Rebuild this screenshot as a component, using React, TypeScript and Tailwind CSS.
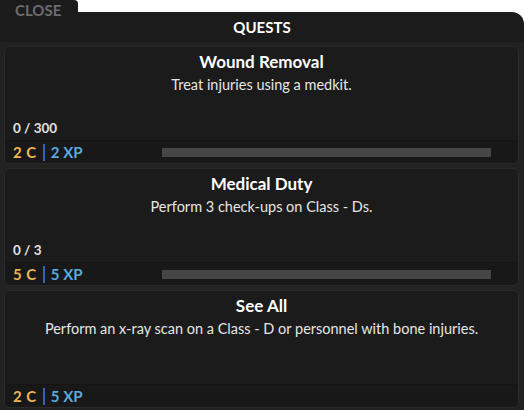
import React from "react";

type Q = { title: string; desc: string; progress?: string; c: string; xp: string; bar: boolean };

const quests: Q[] = [
  { title: "Wound Removal", desc: "Treat injuries using a medkit.", progress: "0 / 300", c: "2 C", xp: "2 XP", bar: true },
  { title: "Medical Duty", desc: "Perform 3 check-ups on Class - Ds.", progress: "0 / 3", c: "5 C", xp: "5 XP", bar: true },
  { title: "See All", desc: "Perform an x-ray scan on a Class - D or personnel with bone injuries.", c: "2 C", xp: "5 XP", bar: false },
];

function Card({ q }: { q: Q }) {
  return (
    <div className="flex flex-col h-[118px] rounded-[6px] border border-[#2a2a2a] bg-[#1b1b1b] overflow-hidden shrink-0">
      <div className="flex-1 flex flex-col px-2">
        <div className="text-center text-white font-bold text-[17px] leading-[20px] pt-[5px]">{q.title}</div>
        <div className="text-center text-[#e6e6e6] text-[14.5px] leading-[16px] mt-[5px]">{q.desc}</div>
        <div className="flex-1" />
        {q.progress && (
          <div className="text-[#e0e0e0] font-bold text-[13.5px] leading-[16px] pb-[4px]">{q.progress}</div>
        )}
      </div>
      <div className="h-[23px] bg-[#181818] border-t border-[#151515] flex items-center pl-[8px] pr-[27px]">
        <span className="text-[#e8b554] font-bold text-[15px] tracking-[0.5px] leading-[18px]">{q.c}</span>
        <span className="w-[2px] h-[17px] bg-[#3563b8] mx-[6px]" />
        <span className="text-[#5aa8de] font-bold text-[15px] leading-[18px]">{q.xp}</span>
        <div className="flex-1" />
        {q.bar && <div className="w-[329px] h-[9px] bg-[#464646]" />}
      </div>
    </div>
  );
}

export default function App() {
  return (
    <div className="w-[524px] h-[410px] bg-white overflow-hidden flex flex-col" style={{ fontFamily: "Lato, 'Noto Sans', sans-serif" }}>
      <div className="h-[12px] flex shrink-0">
        <div className="w-[78px] h-[12px] bg-[#1b1b1b] rounded-tr-[4px] relative">
          <span className="absolute z-10 left-[15px] top-[1px] text-[#6c6c6c] font-bold text-[15px] leading-[18px]">CLOSE</span>
        </div>
      </div>
      <div className="flex-1 flex flex-col bg-[#1b1b1b] rounded-tr-[12px] overflow-hidden">
        <div className="h-[30px] shrink-0 flex items-center justify-center text-white font-bold text-[15px]">QUESTS</div>
        <div className="flex-1 bg-[#222222] flex flex-col gap-[4px] pt-[4px] pl-[4px] pr-[5px]">
          {quests.map((q) => (
            <Card key={q.title} q={q} />
          ))}
        </div>
      </div>
    </div>
  );
}
